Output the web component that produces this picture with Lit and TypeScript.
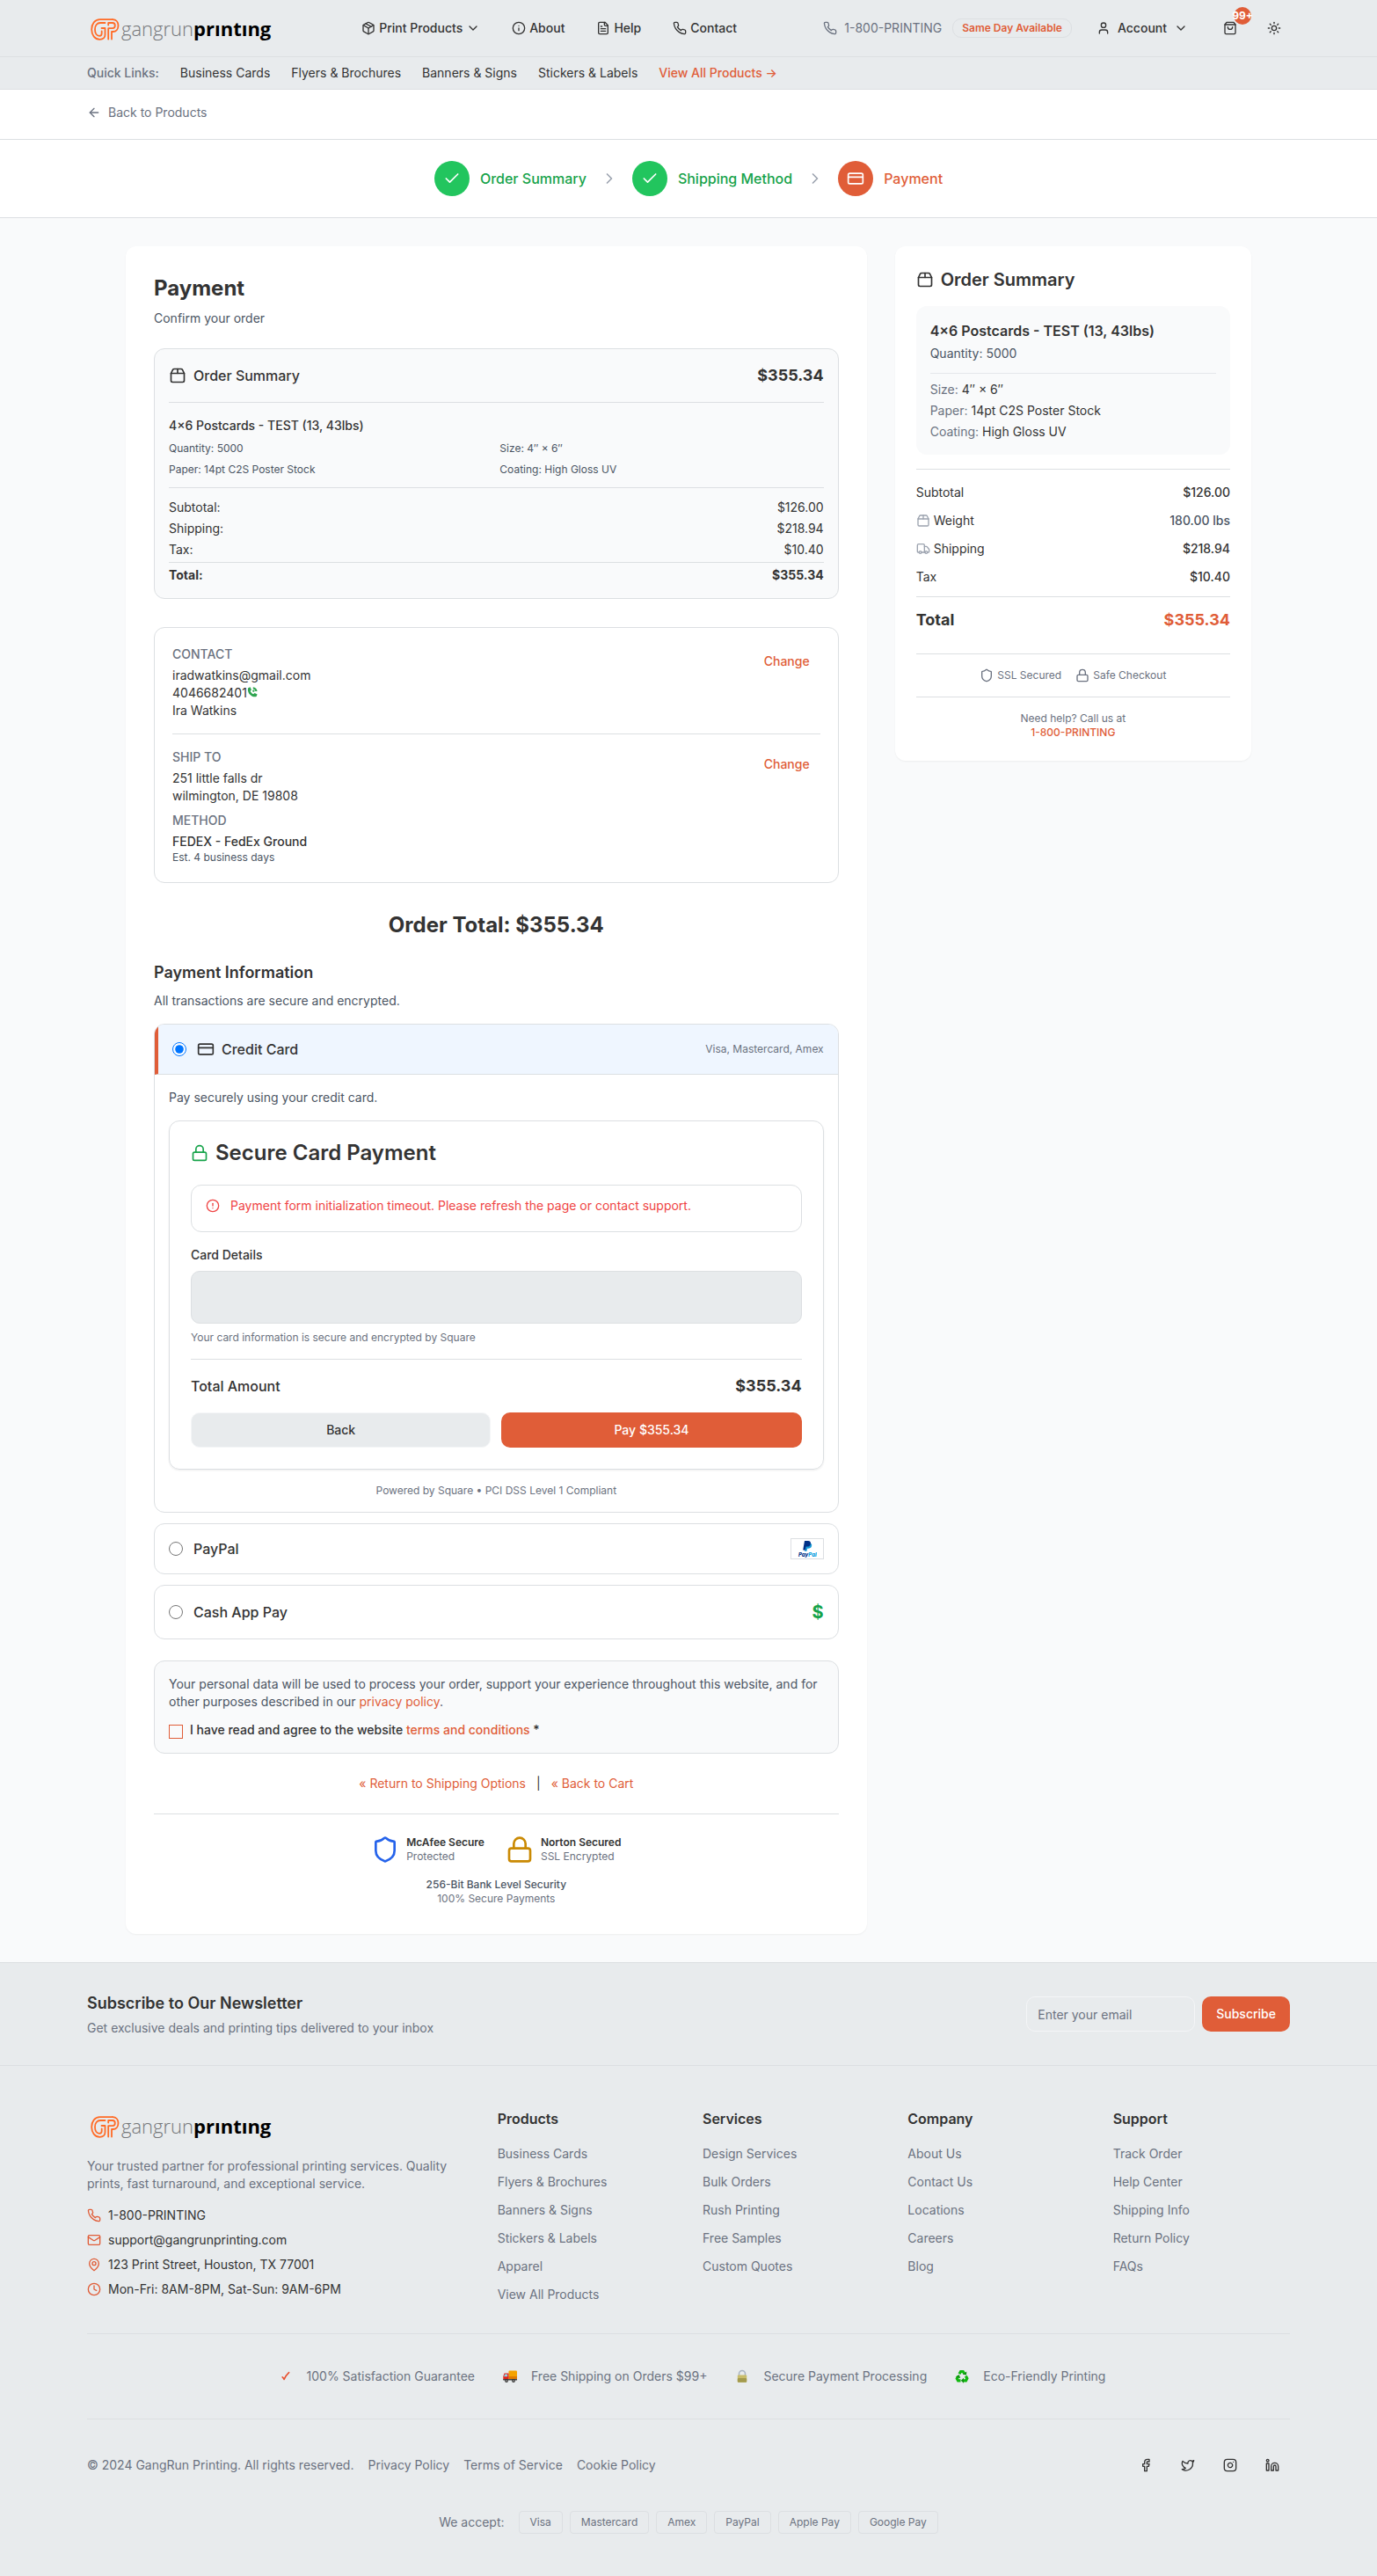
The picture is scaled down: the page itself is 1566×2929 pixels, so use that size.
import { LitElement, html, css, svg, nothing } from "lit";
import { customElement, property, state } from "lit/decorators.js";

const ICONS: Record<string, unknown> = {
  package: svg`<path d="m7.5 4.27 9 5.15"/><path d="M21 8a2 2 0 0 0-1-1.73l-7-4a2 2 0 0 0-2 0l-7 4A2 2 0 0 0 3 8v8a2 2 0 0 0 1 1.73l7 4a2 2 0 0 0 2 0l7-4A2 2 0 0 0 21 16Z"/><path d="m3.3 7 8.7 5 8.7-5"/><path d="M12 22V12"/>`,
  package2: svg`<path d="M3 9h18v10a2 2 0 0 1-2 2H5a2 2 0 0 1-2-2V9Z"/><path d="m3 9 2.45-4.9A2 2 0 0 1 7.24 3h9.52a2 2 0 0 1 1.8 1.1L21 9"/><path d="M12 3v6"/>`,
  chevronDown: svg`<path d="m6 9 6 6 6-6"/>`,
  chevronRight: svg`<path d="m9 18 6-6-6-6"/>`,
  info: svg`<circle cx="12" cy="12" r="10"/><path d="M12 16v-4"/><path d="M12 8h.01"/>`,
  alert: svg`<circle cx="12" cy="12" r="10"/><path d="M12 8v4"/><path d="M12 16h.01"/>`,
  file: svg`<path d="M15 2H6a2 2 0 0 0-2 2v16a2 2 0 0 0 2 2h12a2 2 0 0 0 2-2V7Z"/><path d="M14 2v4a2 2 0 0 0 2 2h4"/><path d="M10 9H8"/><path d="M16 13H8"/><path d="M16 17H8"/>`,
  phone: svg`<path d="M22 16.92v3a2 2 0 0 1-2.18 2 19.79 19.79 0 0 1-8.63-3.07 19.5 19.5 0 0 1-6-6 19.79 19.79 0 0 1-3.07-8.67A2 2 0 0 1 4.11 2h3a2 2 0 0 1 2 1.72 12.84 12.84 0 0 0 .7 2.81 2 2 0 0 1-.45 2.11L8.09 9.91a16 16 0 0 0 6 6l1.27-1.27a2 2 0 0 1 2.11-.45 12.84 12.84 0 0 0 2.81.7A2 2 0 0 1 22 16.92z"/>`,
  user: svg`<path d="M19 21v-2a4 4 0 0 0-4-4H9a4 4 0 0 0-4 4v2"/><circle cx="12" cy="7" r="4"/>`,
  bag: svg`<path d="M6 2 3 6v14a2 2 0 0 0 2 2h14a2 2 0 0 0 2-2V6l-3-4Z"/><path d="M3 6h18"/><path d="M16 10a4 4 0 0 1-8 0"/>`,
  sun: svg`<circle cx="12" cy="12" r="4"/><path d="M12 2v2"/><path d="M12 20v2"/><path d="m4.93 4.93 1.41 1.41"/><path d="m17.66 17.66 1.41 1.41"/><path d="M2 12h2"/><path d="M20 12h2"/><path d="m6.34 17.66-1.41 1.41"/><path d="m19.07 4.93-1.41 1.41"/>`,
  arrowLeft: svg`<path d="m12 19-7-7 7-7"/><path d="M19 12H5"/>`,
  check: svg`<path d="M20 6 9 17l-5-5"/>`,
  card: svg`<rect width="20" height="14" x="2" y="5" rx="2"/><path d="M2 10h20"/>`,
  lock: svg`<rect width="18" height="11" x="3" y="11" rx="2" ry="2"/><path d="M7 11V7a5 5 0 0 1 10 0v4"/>`,
  shield: svg`<path d="M20 13c0 5-3.5 7.5-7.66 8.95a1 1 0 0 1-.67-.01C7.5 20.5 4 18 4 13V6a1 1 0 0 1 1-1c2 0 4.5-1.2 6.24-2.72a1.17 1.17 0 0 1 1.52 0C14.51 3.81 17 5 19 5a1 1 0 0 1 1 1z"/>`,
  truck: svg`<path d="M14 18V6a2 2 0 0 0-2-2H4a2 2 0 0 0-2 2v11a1 1 0 0 0 1 1h2"/><path d="M15 18H9"/><path d="M19 18h2a1 1 0 0 0 1-1v-3.65a1 1 0 0 0-.22-.624l-3.48-4.35A1 1 0 0 0 17.52 8H14"/><circle cx="17" cy="18" r="2"/><circle cx="7" cy="18" r="2"/>`,
  mail: svg`<rect width="20" height="16" x="2" y="4" rx="2"/><path d="m22 7-8.97 5.7a1.94 1.94 0 0 1-2.06 0L2 7"/>`,
  pin: svg`<path d="M20 10c0 6-8 12-8 12s-8-6-8-12a8 8 0 0 1 16 0Z"/><circle cx="12" cy="10" r="3"/>`,
  clock: svg`<circle cx="12" cy="12" r="10"/><path d="M12 6v6l4 2"/>`,
  facebook: svg`<path d="M18 2h-3a5 5 0 0 0-5 5v3H7v4h3v8h4v-8h3l1-4h-4V7a1 1 0 0 1 1-1h3z"/>`,
  twitter: svg`<path d="M22 4s-.7 2.1-2 3.4c1.6 10-9.4 17.3-18 11.6 2.2.1 4.4-.6 6-2C3 15.5.5 9.6 3 5c2.2 2.6 5.6 4.1 9 4-.9-4.2 4-6.6 7-3.8 1.1 0 3-1.2 3-1.2z"/>`,
  instagram: svg`<rect width="20" height="20" x="2" y="2" rx="5" ry="5"/><path d="M16 11.37A4 4 0 1 1 12.63 8 4 4 0 0 1 16 11.37z"/><path d="M17.5 6.5h.01"/>`,
  linkedin: svg`<path d="M16 8a6 6 0 0 1 6 6v7h-4v-7a2 2 0 0 0-4 0v7h-4v-7a6 6 0 0 1 6-6z"/><rect width="4" height="12" x="2" y="9"/><circle cx="4" cy="4" r="2"/>`,
};

const icon = (name: string, size = 16) => html`<svg
  class="icon" width=${size} height=${size} viewBox="0 0 24 24" fill="none"
  stroke="currentColor" stroke-width="2" stroke-linecap="round" stroke-linejoin="round"
  aria-hidden="true">${ICONS[name]}</svg>`;

const base = css`
  *, *::before, *::after { box-sizing: border-box; }
  h1, h2, h3, p, dl, dd, dt, ul { margin: 0; padding: 0; }
  h1, h2, h3 { font-size: inherit; font-weight: inherit; }
  ul { list-style: none; }
  a { color: inherit; text-decoration: none; }
  button, input { font: inherit; color: inherit; margin: 0; }
  button { background: none; border: 0; padding: 0; cursor: pointer; }
  .icon { flex: none; display: block; }
  .container { max-width: 1400px; margin: 0 auto; padding: 0 16px; }
  .accent { color: #e05d38; }
  .primary {
    background: #e05d38; color: #fff; font-size: 14px; line-height: 20px;
    font-weight: 500; height: 40px; padding: 0 16px; border-radius: 10px;
  }
`;

@customElement("brand-logo")
export class BrandLogo extends LitElement {
  static styles = css`
    :host { display: block; }
    .logo { display: flex; align-items: center; gap: 2px; width: 210px; height: 40px; padding-left: 4px; text-decoration: none; }
    .mark { display: block; flex: none; margin-top: 2px; }
    .word { font: 300 22px/28px "Open Sans", "Noto Sans", sans-serif; color: #75777a; white-space: nowrap; }
    .strong { font-weight: 700; color: #000; }
  `;
  render() {
    return html`<a class="logo" href="#" aria-label="GangRun Printing">
      <svg class="mark" width="33" height="25" viewBox="0 0 33 25" fill="none" stroke="#ff6b26" stroke-width="1.8" stroke-linecap="round" stroke-linejoin="round" aria-hidden="true">
        <path d="M25 1.200H10.500C5 1.200 1.200 6 1.200 12.500S5 23.800 10.500 23.800c3.800 0 6-2.300 6-5.300V11h-4"/>
        <path d="M16.500 5H11C7.500 5 5 8 5 12.500c0 4.300 2 7.300 5 7.300 1.800 0 2.700-1 2.700-2.800V14.500"/>
        <path d="M25 1.200c4 0 6.500 2.800 6.500 6.900S29 15 25.500 15H24v8.500"/>
        <path d="M20.200 23.500V11.200H25c1.700 0 2.800-1.200 2.800-3.100S26.700 5 25 5h-4.800v2.500"/>
      </svg>
      <span class="word">gangrun<span class="strong">prıntıng</span></span>
    </a>`;
  }
}

@customElement("site-header")
export class SiteHeader extends LitElement {
  static styles = [base, css`
    :host { display: block; background: #e8ebed; font-size: 14px; line-height: 20px; }
    .top, .quick { border-bottom: 1px solid #dcdfe2; }
    .bar { display: flex; align-items: center; justify-content: space-between; height: 64px; }
    .nav { display: flex; gap: 4px; font-weight: 500; }
    .nav-item { display: flex; align-items: center; gap: 4px; padding: 8px 16px; }
    .tools { display: flex; align-items: center; gap: 12px; }
    .call { display: flex; align-items: center; gap: 8px; color: #6b7280; }
    .badge { border: 1px solid #dcdfe2; border-radius: 10px; padding: 2px 10px; font-size: 12px; line-height: 16px; font-weight: 600; color: #e05d38; }
    .account { display: flex; align-items: center; gap: 8px; font-weight: 500; padding: 8px 12px; margin: 0 4px; }
    .square { position: relative; display: flex; align-items: center; justify-content: center; width: 40px; height: 40px; }
    .slim { width: 36px; }
    .count {
      position: absolute; top: -4px; right: -4px; width: 20px; height: 20px; border-radius: 50%;
      background: #e05d38; color: #fff; display: flex; align-items: center; justify-content: center;
      font-size: 12px; line-height: 16px; font-weight: 700;
    }
    .links { display: flex; gap: 24px; padding-top: 8px; padding-bottom: 8px; }
    .lead { color: #6b7280; font-weight: 500; }
    .all { color: #e05d38; font-weight: 500; }
  `];
  render() {
    return html`
      <header>
        <div class="top"><div class="container bar">
          <brand-logo></brand-logo>
          <nav class="nav" aria-label="Main">
            <button class="nav-item">${icon("package")}Print Products${icon("chevronDown")}</button>
            <a class="nav-item" href="#">${icon("info")}About</a>
            <a class="nav-item" href="#">${icon("file")}Help</a>
            <a class="nav-item" href="#">${icon("phone")}Contact</a>
          </nav>
          <div class="tools">
            <a class="call" href="#">${icon("phone")}1-800-PRINTING</a>
            <span class="badge">Same Day Available</span>
            <button class="account">${icon("user")}Account${icon("chevronDown")}</button>
            <button class="square" aria-label="Cart">${icon("bag")}<span class="count">99+</span></button>
            <button class="square slim" aria-label="Toggle theme">${icon("sun")}</button>
          </div>
        </div></div>
        <div class="quick"><nav class="container links" aria-label="Quick links">
          <span class="lead">Quick Links:</span>
          ${["Business Cards", "Flyers & Brochures", "Banners & Signs", "Stickers & Labels"].map((t) => html`<a href="#">${t}</a>`)}
          <a class="all" href="#">View All Products →</a>
        </nav></div>
      </header>`;
  }
}

@customElement("checkout-steps")
export class CheckoutSteps extends LitElement {
  static styles = [base, css`
    :host { display: block; background: #fff; border-bottom: 1px solid #dcdfe2; }
    .steps { display: flex; align-items: center; justify-content: center; gap: 16px; padding: 24px 0; font-size: 16px; line-height: 24px; font-weight: 500; }
    .step { display: flex; align-items: center; gap: 12px; color: #16a34a; }
    .dot { display: flex; align-items: center; justify-content: center; width: 40px; height: 40px; border-radius: 50%; background: #22c55e; color: #fff; }
    .current { color: #e05d38; }
    .current .dot { background: #e05d38; }
    .sep { color: #9ca3af; }
  `];
  render() {
    return html`<div class="steps">
      <div class="step"><span class="dot">${icon("check", 20)}</span>Order Summary</div>
      <span class="sep">${icon("chevronRight", 20)}</span>
      <div class="step"><span class="dot">${icon("check", 20)}</span>Shipping Method</div>
      <span class="sep">${icon("chevronRight", 20)}</span>
      <div class="step current" aria-current="step"><span class="dot">${icon("card", 20)}</span>Payment</div>
    </div>`;
  }
}

@customElement("payment-panel")
export class PaymentPanel extends LitElement {
  @state() private method = "card";

  static styles = [base, css`
    :host { display: block; background: #fff; border-radius: 12px; padding: 32px; box-shadow: 0 1px 2px rgba(0, 0, 0, 0.05); font-size: 14px; line-height: 20px; }
    .title { font-size: 24px; line-height: 32px; font-weight: 700; }
    .sub { margin-top: 8px; color: #4b5563; }
    .box { border: 1px solid #dcdfe2; border-radius: 12px; overflow: hidden; }
    .tint { background: #f9fafb; padding: 16px; }
    .row { display: flex; align-items: center; justify-content: space-between; }
    .label { display: flex; align-items: center; gap: 8px; font-size: 16px; line-height: 24px; font-weight: 500; }
    .amount { font-size: 18px; line-height: 28px; font-weight: 700; }

    .summary { margin-top: 24px; }
    .summary-head { padding-bottom: 16px; border-bottom: 1px solid #dcdfe2; }
    .product { margin-top: 16px; font-weight: 500; }
    .specs { display: grid; grid-template-columns: 1fr 1fr; gap: 8px; margin-top: 8px; padding-bottom: 12px; border-bottom: 1px solid #dcdfe2; font-size: 12px; line-height: 16px; color: #4b5563; }
    .lines { display: grid; gap: 4px; margin-top: 12px; }
    .grand { border-top: 1px solid #dcdfe2; padding-top: 4px; font-weight: 700; }

    .review { margin-top: 32px; padding: 20px; }
    .entry { display: flex; justify-content: space-between; align-items: flex-start; }
    .entry + .entry { border-top: 1px solid #dcdfe2; margin-top: 16px; padding-top: 16px; }
    .caps { font-weight: 500; color: #6b7280; margin-bottom: 4px; }
    .caps.next { margin-top: 8px; }
    .strong { font-weight: 500; }
    .small { font-size: 12px; line-height: 16px; }
    .note { color: #4b5563; }
    .dial { display: inline-block; vertical-align: 0; }
    .change { color: #e05d38; font-weight: 500; height: 36px; padding: 0 12px; }

    .order-total { margin-top: 32px; text-align: center; font-size: 24px; line-height: 32px; font-weight: 700; }
    .section { margin-top: 24px; font-size: 18px; line-height: 28px; font-weight: 600; }

    .methods { display: grid; gap: 12px; margin-top: 16px; }
    .option { display: flex; align-items: center; gap: 12px; padding: 16px; }
    .option.active { border-left: 4px solid #e05d38; border-bottom: 1px solid #dcdfe2; background: #eff6ff; }
    .option .label { flex: 1; }
    .radio { width: 16px; height: 16px; flex: none; }
    .muted { color: #6b7280; }
    .body { padding: 16px; }
    .paypal { display: flex; align-items: center; justify-content: center; width: 38px; height: 24px; border: 1px solid #dcdfe2; }
    .cash { font-size: 20px; line-height: 28px; font-weight: 700; color: #16a34a; }

    .secure { margin-top: 16px; padding: 24px; border: 1px solid #dcdfe2; border-radius: 12px; box-shadow: 0 1px 2px rgba(0, 0, 0, 0.08); }
    .secure-title { display: flex; align-items: center; gap: 8px; font-size: 24px; line-height: 24px; font-weight: 600; }
    .green { color: #16a34a; }
    .alert { display: flex; align-items: center; gap: 12px; margin-top: 24px; padding: 13px 16px 19px; border: 1px solid #dcdfe2; border-radius: 12px; color: #ef4444; }
    .field-label { display: block; margin-top: 16px; font-weight: 500; }
    .field { display: block; width: 100%; height: 60px; margin-top: 8px; padding: 0 16px; border: 1px solid #dcdfe2; border-radius: 10px; background: #e8ebed; }
    .help { margin-top: 8px; }
    .due { margin-top: 16px; padding-top: 16px; border-top: 1px solid #dcdfe2; }
    .actions { display: grid; grid-template-columns: 1fr 1fr; gap: 12px; margin-top: 16px; }
    .back { height: 40px; border: 1px solid #f4f5f7; border-radius: 10px; background: #e8ebed; font-weight: 500; }
    .powered { margin-top: 16px; text-align: center; }

    .terms { margin-top: 24px; color: #4b5563; }
    .agree { display: flex; gap: 8px; margin-top: 12px; font-weight: 500; color: #333; }
    .tick { appearance: none; width: 16px; height: 16px; margin-top: 4px; flex: none; border: 1px solid #e05d38; }
    .tick:checked { background: #e05d38; }
    .returns { display: flex; justify-content: center; gap: 12px; margin-top: 24px; padding-bottom: 24px; border-bottom: 1px solid #dcdfe2; }
    .seals { display: flex; justify-content: center; gap: 24px; margin-top: 24px; }
    .seal { display: flex; align-items: center; gap: 8px; }
    .seal-name { font-weight: 600; }
    .blue { color: #2563eb; }
    .gold { color: #ca8a04; }
    .bank { margin-top: 16px; text-align: center; color: #6b7280; }
    .bank-name { font-weight: 500; color: #4b5563; }
  `];

  private radio(id: string) {
    return html`<input class="radio" type="radio" name="method" id=${id} .checked=${this.method === id} @change=${() => (this.method = id)} />`;
  }

  render() {
    return html`
      <h1 class="title">Payment</h1>
      <p class="sub">Confirm your order</p>

      <section class="box tint summary">
        <div class="row summary-head">
          <h2 class="label">${icon("package2", 20)}Order Summary</h2>
          <span class="amount">$355.34</span>
        </div>
        <h3 class="product">4×6 Postcards - TEST (13, 43lbs)</h3>
        <div class="specs">
          <span>Quantity: 5000</span><span>Size: 4″ × 6″</span>
          <span>Paper: 14pt C2S Poster Stock</span><span>Coating: High Gloss UV</span>
        </div>
        <dl class="lines">
          <div class="row"><dt>Subtotal:</dt><dd>$126.00</dd></div>
          <div class="row"><dt>Shipping:</dt><dd>$218.94</dd></div>
          <div class="row"><dt>Tax:</dt><dd>$10.40</dd></div>
          <div class="row grand"><dt>Total:</dt><dd>$355.34</dd></div>
        </dl>
      </section>

      <section class="box review">
        <div class="entry">
          <div>
            <h3 class="caps">CONTACT</h3>
            <p>iradwatkins@gmail.com</p>
            <p>4046682401<svg class="dial" width="12" height="12" viewBox="0 0 12 12" aria-hidden="true">
              <path d="M1.200 1.200 3.600.2 5 3.400 3.600 4.800c.7 1.600 1.900 2.800 3.500 3.500l1.500-1.400 3 1.500-1 2.700C5 12.500-.5 6.500 1.200 1.200z" fill="#2ea44f"/>
              <path d="M6.800.3c2.600.2 4.600 2.200 4.800 4.800H9.300C9.200 3.700 8.200 2.700 6.800 2.600z" fill="#2ea44f"/><circle cx="7.300" cy="4.600" r="1.200" fill="#2ea44f"/>
            </svg></p>
            <p>Ira Watkins</p>
          </div>
          <button class="change">Change</button>
        </div>
        <div class="entry">
          <div>
            <h3 class="caps">SHIP TO</h3>
            <p>251 little falls dr</p>
            <p>wilmington, DE 19808</p>
            <h3 class="caps next">METHOD</h3>
            <p class="strong">FEDEX - FedEx Ground</p>
            <p class="small note">Est. 4 business days</p>
          </div>
          <button class="change">Change</button>
        </div>
      </section>

      <h2 class="order-total">Order Total: $355.34</h2>
      <h2 class="section">Payment Information</h2>
      <p class="sub">All transactions are secure and encrypted.</p>

      <div class="methods">
        <div class="box">
          <div class="option active">
            ${this.radio("card")}
            <label class="label" for="card">${icon("card", 20)}Credit Card</label>
            <span class="small muted">Visa, Mastercard, Amex</span>
          </div>
          <div class="body">
            <p class="note">Pay securely using your credit card.</p>
            <div class="secure">
              <h3 class="secure-title"><span class="green">${icon("lock", 20)}</span>Secure Card Payment</h3>
              <div class="alert" role="alert">${icon("alert")}Payment form initialization timeout. Please refresh the page or contact support.</div>
              <label class="field-label" for="card-number">Card Details</label>
              <input class="field" id="card-number" type="text" />
              <p class="small muted help">Your card information is secure and encrypted by Square</p>
              <div class="row due"><span class="label">Total Amount</span><span class="amount">$355.34</span></div>
              <div class="actions">
                <button class="back">Back</button>
                <button class="primary">Pay $355.34</button>
              </div>
            </div>
            <p class="small muted powered">Powered by Square • PCI DSS Level 1 Compliant</p>
          </div>
        </div>
        <div class="box option">
          ${this.radio("paypal")}
          <label class="label" for="paypal">PayPal</label>
          <span class="paypal"><svg width="22" height="20" viewBox="0 0 22 20" aria-hidden="true">
            <path d="M9.600 3.500h4c2.200.2 3 1.500 2.500 3.300-.5 2.200-2 3-4 3h-1l-.6 3H8z" fill="#179bd7"/>
            <path d="M8 1h4c2.300 0 3.400 1.300 2.900 3.400-.5 2.200-2 3.100-4.100 3.100H9.600L8.900 11.500H6.200z" fill="#003087"/>
            <text x="1" y="18.500" font-family="Inter, sans-serif" font-size="6" font-weight="800" font-style="italic" fill="#003087">Pay<tspan fill="#009cde">Pal</tspan></text>
          </svg></span>
        </div>
        <div class="box option">
          ${this.radio("cashapp")}
          <label class="label" for="cashapp">Cash App Pay</label>
          <span class="cash">$</span>
        </div>
      </div>

      <div class="box tint terms">
        <p>Your personal data will be used to process your order, support your experience throughout this website, and for other purposes described in our <a class="accent" href="#">privacy policy</a>.</p>
        <div class="agree">
          <input class="tick" type="checkbox" id="agree" />
          <label for="agree">I have read and agree to the website <a class="accent" href="#">terms and conditions</a> *</label>
        </div>
      </div>

      <div class="returns">
        <a class="accent" href="#">« Return to Shipping Options</a><span>|</span><a class="accent" href="#">« Back to Cart</a>
      </div>
      <div class="seals small">
        <div class="seal"><span class="blue">${icon("shield", 32)}</span><div><p class="seal-name">McAfee Secure</p><p class="muted">Protected</p></div></div>
        <div class="seal"><span class="gold">${icon("lock", 32)}</span><div><p class="seal-name">Norton Secured</p><p class="muted">SSL Encrypted</p></div></div>
      </div>
      <div class="bank small"><p class="bank-name">256-Bit Bank Level Security</p><p>100% Secure Payments</p></div>
    `;
  }
}

@customElement("order-aside")
export class OrderAside extends LitElement {
  static styles = [base, css`
    :host { display: block; background: #fff; border-radius: 12px; padding: 24px; box-shadow: 0 1px 2px rgba(0, 0, 0, 0.05); font-size: 14px; line-height: 20px; }
    .title { display: flex; align-items: center; gap: 8px; font-size: 20px; line-height: 28px; font-weight: 600; }
    .item { margin-top: 16px; padding: 16px; border-radius: 12px; background: #f9fafb; }
    .name { font-size: 16px; line-height: 24px; font-weight: 600; }
    .qty { margin-top: 4px; padding-bottom: 12px; border-bottom: 1px solid #e5e7eb; color: #4b5563; }
    .specs { display: grid; gap: 4px; margin-top: 8px; }
    .key { color: #6b7280; }
    .costs { display: grid; gap: 12px; margin-top: 16px; padding-top: 16px; border-top: 1px solid #dcdfe2; }
    .row { display: flex; align-items: center; justify-content: space-between; }
    .term { display: flex; align-items: center; gap: 4px; }
    .costs .icon { color: #9ca3af; }
    .value { font-weight: 500; }
    .soft { color: #4b5563; }
    .total { padding-top: 12px; border-top: 1px solid #dcdfe2; font-size: 18px; line-height: 28px; font-weight: 700; }
    .sum { color: #e05d38; }
    .trust { display: flex; justify-content: center; gap: 16px; margin-top: 24px; padding: 16px 0; border: solid #dcdfe2; border-width: 1px 0; font-size: 12px; line-height: 16px; color: #6b7280; }
    .help { margin-top: 16px; text-align: center; font-size: 12px; line-height: 16px; color: #6b7280; }
    .tel { display: block; font-weight: 500; color: #e05d38; }
  `];
  render() {
    const specs = [["Size:", "4″ × 6″"], ["Paper:", "14pt C2S Poster Stock"], ["Coating:", "High Gloss UV"]];
    const costs = [["", "Subtotal", "$126.00"], ["package2", "Weight", "180.00 lbs"], ["truck", "Shipping", "$218.94"], ["", "Tax", "$10.40"]];
    return html`
      <h2 class="title">${icon("package2", 20)}Order Summary</h2>
      <div class="item">
        <h3 class="name">4×6 Postcards - TEST (13, 43lbs)</h3>
        <p class="qty">Quantity: 5000</p>
        <div class="specs">${specs.map(([k, v]) => html`<p><span class="key">${k}</span> ${v}</p>`)}</div>
      </div>
      <dl class="costs">
        ${costs.map(([i, k, v]) => html`<div class="row">
          <dt class="term">${i ? icon(i) : nothing}${k}</dt>
          <dd class="value ${k === "Weight" ? "soft" : ""}">${v}</dd>
        </div>`)}
        <div class="row total"><dt>Total</dt><dd class="sum">$355.34</dd></div>
      </dl>
      <div class="trust">
        <span class="term">${icon("shield")}SSL Secured</span>
        <span class="term">${icon("lock")}Safe Checkout</span>
      </div>
      <p class="help">Need help? Call us at <a class="tel" href="#">1-800-PRINTING</a></p>
    `;
  }
}

@customElement("link-column")
export class LinkColumn extends LitElement {
  @property() heading = "";
  @property({ attribute: false }) links: string[] = [];
  static styles = [base, css`
    :host { display: block; }
    .heading { font-size: 16px; line-height: 24px; font-weight: 600; }
    .list { display: grid; gap: 8px; margin-top: 16px; font-size: 14px; line-height: 24px; color: #6b7280; }
    .link { display: block; }
  `];
  render() {
    return html`<h3 class="heading">${this.heading}</h3>
      <ul class="list">${this.links.map((l) => html`<li><a class="link" href="#">${l}</a></li>`)}</ul>`;
  }
}

@customElement("site-footer")
export class SiteFooter extends LitElement {
  static styles = [base, css`
    :host { display: block; background: #e8ebed; border-top: 1px solid #dcdfe2; font-size: 14px; line-height: 20px; color: #6b7280; }
    .news { border-bottom: 1px solid #dcdfe2; padding: 32px 0; }
    .row { display: flex; align-items: center; justify-content: space-between; }
    .news-title { font-size: 18px; line-height: 28px; font-weight: 600; color: #333; margin-bottom: 4px; }
    .form { display: flex; gap: 8px; }
    .email { width: 192px; height: 40px; padding: 0 12px; border: 1px solid #f4f5f7; border-radius: 10px; background: transparent; }
    .email::placeholder { color: #6b7280; opacity: 1; }
    .columns { display: grid; grid-template-columns: repeat(6, minmax(0, 1fr)); gap: 32px; padding-top: 48px; color: #333; }
    .about { grid-column: span 2; }
    .desc { margin-top: 16px; color: #6b7280; }
    .contacts { display: grid; gap: 8px; margin-top: 16px; }
    .contact { display: flex; align-items: center; gap: 8px; }
    .contact .icon { color: #e05d38; }
    .perks { display: flex; justify-content: center; gap: 24px; margin-top: 32px; padding: 32px 0; border: solid #dcdfe2; border-width: 1px 0; }
    .perk { display: flex; align-items: center; gap: 8px; }
    .perk-art { display: flex; align-items: center; justify-content: center; width: 32px; height: 32px; }
    .legal { display: flex; gap: 16px; }
    .social { display: flex; gap: 8px; color: #333; }
    .social-link { display: flex; align-items: center; justify-content: center; width: 40px; height: 40px; }
    .bottom { margin-top: 32px; }
    .accept { display: flex; align-items: center; justify-content: center; gap: 8px; margin-top: 32px; padding-bottom: 48px; }
    .accept-label { margin-right: 8px; }
    .chip { border: 1px solid #dcdfe2; border-radius: 4px; padding: 4px 12px; font-size: 12px; line-height: 16px; }
  `];
  render() {
    const art = [
      svg`<path d="M4.200 8.800c.8.700 1.400 1.500 1.900 2.600C7.400 8.500 9 6 11.600 3.600" fill="none" stroke="#e8502f" stroke-width="1.600" stroke-linecap="round" stroke-linejoin="round"/>`,
      svg`<rect x="6.500" y="1.500" width="9.500" height="9.500" rx="1" fill="#f5a300"/><rect x="6.500" y="8" width="9.500" height="3" fill="#e07b00"/><path d="M1.500 4.500h5V12H.3V8z" fill="#e2231a"/><path d="M2.200 5.500h2.900v2.700H1z" fill="#8fd3e8"/><path d="M.3 11H16v1.500H.3z" fill="#444"/><circle cx="4" cy="13" r="1.900" fill="#333"/><circle cx="12" cy="13" r="1.900" fill="#333"/><circle cx="4" cy="13" r=".8" fill="#bbb"/><circle cx="12" cy="13" r=".8" fill="#bbb"/>`,
      svg`<path d="M4.500 7.500V5a3.500 3.500 0 0 1 7 0v2.500" fill="none" stroke="#a9b4c2" stroke-width="1.600"/><rect x="2.800" y="6.500" width="10.400" height="8.300" rx="1" fill="#c9bd6a"/><rect x="2.800" y="10" width="10.400" height="4.800" rx="1" fill="#a39a4e"/>`,
      svg`<g fill="none" stroke="#10b810" stroke-width="3.200"><path d="M5 5.200 6.600 2.500h2.600l1.500 2.300"/><path d="M12.300 7.600l1.500 2.700-1.300 2.500H9.500"/><path d="M6.500 12.800H3.600L2.300 10.400l1.500-2.600"/></g><path d="m8.800 5.700 4.200.8.300-4z" fill="#109010"/><path d="m10 9.800-3.200 3 3.200 3z" fill="#109010"/><path d="M1 8.800 4.700 6l1.500 4z" fill="#109010"/>`,
    ];
    const perks = ["100% Satisfaction Guarantee", "Free Shipping on Orders $99+", "Secure Payment Processing", "Eco-Friendly Printing"];
    const contacts = [["phone", "1-800-PRINTING"], ["mail", "support@gangrunprinting.com"], ["pin", "123 Print Street, Houston, TX 77001"], ["clock", "Mon-Fri: 8AM-8PM, Sat-Sun: 9AM-6PM"]];
    return html`<footer>
      <div class="news"><div class="container row">
        <div><h2 class="news-title">Subscribe to Our Newsletter</h2><p>Get exclusive deals and printing tips delivered to your inbox</p></div>
        <div class="form">
          <input class="email" type="email" placeholder="Enter your email" aria-label="Email address" />
          <button class="primary">Subscribe</button>
        </div>
      </div></div>
      <div class="container">
        <div class="columns">
          <div class="about">
            <brand-logo></brand-logo>
            <p class="desc">Your trusted partner for professional printing services. Quality prints, fast turnaround, and exceptional service.</p>
            <ul class="contacts">${contacts.map(([i, t]) => html`<li class="contact">${icon(i)}${t}</li>`)}</ul>
          </div>
          <link-column heading="Products" .links=${["Business Cards", "Flyers & Brochures", "Banners & Signs", "Stickers & Labels", "Apparel", "View All Products"]}></link-column>
          <link-column heading="Services" .links=${["Design Services", "Bulk Orders", "Rush Printing", "Free Samples", "Custom Quotes"]}></link-column>
          <link-column heading="Company" .links=${["About Us", "Contact Us", "Locations", "Careers", "Blog"]}></link-column>
          <link-column heading="Support" .links=${["Track Order", "Help Center", "Shipping Info", "Return Policy", "FAQs"]}></link-column>
        </div>
        <ul class="perks">${perks.map((t, i) => html`<li class="perk"><span class="perk-art"><svg width="16" height="16" viewBox="0 0 16 16" aria-hidden="true">${art[i]}</svg></span>${t}</li>`)}</ul>
        <div class="row bottom">
          <div class="legal"><span>© 2024 GangRun Printing. All rights reserved.</span><a href="#">Privacy Policy</a><a href="#">Terms of Service</a><a href="#">Cookie Policy</a></div>
          <div class="social">${["facebook", "twitter", "instagram", "linkedin"].map((n) => html`<a class="social-link" href="#" aria-label=${n}>${icon(n)}</a>`)}</div>
        </div>
        <div class="accept"><span class="accept-label">We accept:</span>
          ${["Visa", "Mastercard", "Amex", "PayPal", "Apple Pay", "Google Pay"].map((t) => html`<span class="chip">${t}</span>`)}
        </div>
      </div>
    </footer>`;
  }
}

@customElement("app-root")
export class AppRoot extends LitElement {
  static styles = [base, css`
    :host { display: block; min-height: 100vh; background: #f9fafb; color: #333; font-family: Inter, "Liberation Sans", sans-serif; font-size: 16px; line-height: 24px; }
    .crumb { background: #fff; border-bottom: 1px solid #dcdfe2; font-size: 14px; line-height: 20px; }
    .back { display: flex; align-items: center; gap: 8px; padding: 16px 0 20px; color: #6b7280; }
    .main { display: grid; grid-template-columns: repeat(3, minmax(0, 1fr)); gap: 32px; align-items: start; max-width: 1280px; margin: 0 auto; padding: 32px 0; }
    .wide { grid-column: span 2; }
  `];
  render() {
    return html`
      <site-header></site-header>
      <div class="crumb"><div class="container"><a class="back" href="#">${icon("arrowLeft")}Back to Products</a></div></div>
      <checkout-steps></checkout-steps>
      <main class="main">
        <payment-panel class="wide"></payment-panel>
        <order-aside></order-aside>
      </main>
      <site-footer></site-footer>`;
  }
}
